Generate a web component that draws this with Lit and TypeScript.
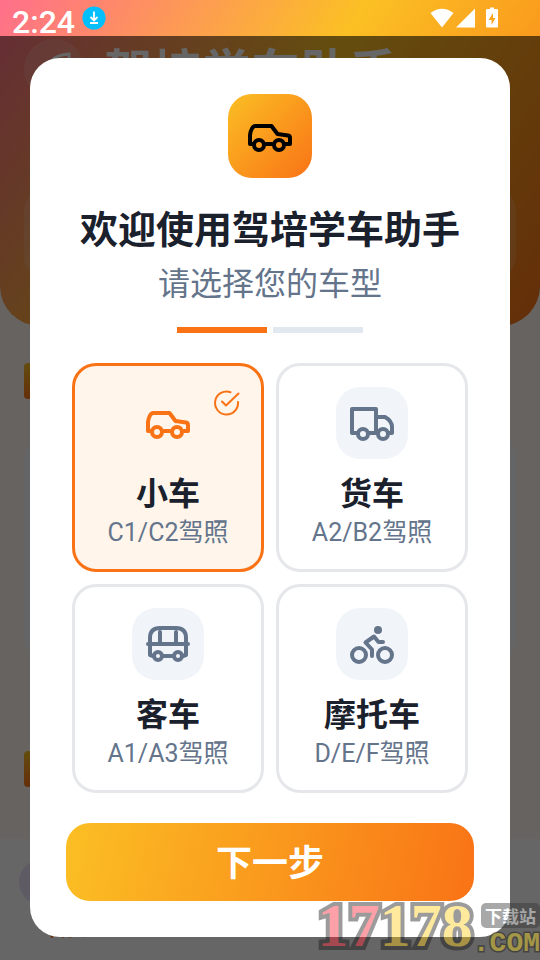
import { LitElement, html, svg, css } from "lit";
import { customElement, state } from "lit/decorators.js";
import { classMap } from "lit/directives/class-map.js";

const carIcon = svg`
  <path d="M8 32H4V23C4.500 18 7 14 9 14H25.500L31.500 22L42 23.500Q44 24 44 26V32H40M20 32H26" />
  <circle cx="13" cy="33" r="5" />
  <circle cx="33" cy="33" r="5" />`;

const truckIcon = svg`
  <path d="M9 34H4V10H28V34M28 18H37Q44 22 44 28V34H41M20 34H29" />
  <circle cx="15" cy="35" r="5" />
  <circle cx="35" cy="35" r="5" />`;

const busIcon = svg`
  <path d="M9 36L6 35V18Q6 8 16 8H32Q42 8 42 18V35L39 36M4 24H44M16 12V24M32 12V24M19 36H29" />
  <circle cx="14" cy="36" r="4" />
  <circle cx="34" cy="36" r="4" />`;

const motoIcon = svg`
  <circle cx="11" cy="35" r="7" />
  <circle cx="37" cy="35" r="7" />
  <circle class="solid" cx="30" cy="10" r="4" />
  <path d="M24 36V29.500L17.500 22.500L26 16.500L30.500 22H35" />`;

const vehicles = [
  { id: "car", name: "小车", licence: "C1/C2驾照", icon: carIcon },
  { id: "truck", name: "货车", licence: "A2/B2驾照", icon: truckIcon },
  { id: "bus", name: "客车", licence: "A1/A3驾照", icon: busIcon },
  { id: "moto", name: "摩托车", licence: "D/E/F驾照", icon: motoIcon },
];

@customElement("status-bar")
export class StatusBar extends LitElement {
  static styles = css`
    :host {
      display: flex;
      align-items: center;
      height: 36px;
      padding: 0 42px 0 12px;
      box-sizing: border-box;
      color: #fff;
    }
    .time {
      font: 500 32px/44px Roboto, sans-serif;
      margin-top: 8px;
    }
    .download {
      width: 24px;
      height: 24px;
      margin-left: 7px;
    }
    .system {
      width: 68px;
      height: 22px;
      margin-left: auto;
    }
  `;

  render() {
    return html`
      <span class="time">2:24</span>
      <svg class="download" viewBox="0 0 24 24" aria-hidden="true">
        <circle cx="12" cy="12" r="11.600" fill="#00bfff" />
        <path d="M12 5.500V14M8.500 11L12 14.500L15.500 11M8 17H16" fill="none" stroke="#fff" stroke-width="1.800" />
      </svg>
      <svg class="system" viewBox="0 0 68 22" fill="#fff" aria-hidden="true">
        <path d="M0.500 6Q12 -2.500 23.500 6L12 20.500Z" />
        <path d="M45 1.500V20.500H26Z" />
        <path
          fill-rule="evenodd"
          d="M60 0.500H64V2H67Q68 2 68 3V20Q68 20.500 67 20.500H57Q56 20.500 56 19.500V3Q56 2 57 2H60ZM63 6L58.500 13H61.500V18L65.500 11H63Z"
        />
      </svg>
    `;
  }
}

@customElement("home-page")
export class HomePage extends LitElement {
  static styles = css`
    :host {
      display: flex;
      flex-direction: column;
      background: #fff8f0;
    }
    .hero {
      padding-bottom: 46px;
      border-radius: 0 0 40px 40px;
      background: linear-gradient(125deg, #ff6f8b 0%, #fbc024 48%, #f97316 100%);
    }
    .brand {
      display: flex;
      align-items: center;
      gap: 20px;
      padding: 3px 24px 0;
      color: #fff;
    }
    .logo {
      width: 60px;
      height: 60px;
      border-radius: 50%;
      background: rgba(255, 255, 255, 0.15);
    }
    .name {
      margin: 0;
      font: 700 49px/56px "Noto Sans CJK SC", sans-serif;
      white-space: nowrap;
    }
    .stats {
      height: 93px;
      margin: 88px 24px 0;
      border-radius: 24px;
      background: rgba(255, 255, 255, 0.15);
    }
    .sections {
      flex: 1;
      padding: 37px 24px 0;
    }
    .marker {
      width: 8px;
      height: 36px;
      border-radius: 4px;
      background: linear-gradient(#fbbf24, #f97316);
    }
    .panel {
      height: 225px;
      margin: 37px 0 90px;
      border-radius: 24px;
      background: #fafcff;
    }
    .tabs {
      display: flex;
      height: 121px;
      padding: 20px 19px 0;
      box-sizing: border-box;
      background: #fff;
    }
    .tab {
      display: flex;
      flex-direction: column;
      align-items: center;
      width: 96px;
      font: 500 19px/28px "Noto Sans CJK SC", sans-serif;
      color: #f97316;
    }
    .dot {
      width: 96px;
      height: 46px;
      border-radius: 23px;
      background: #ebe4fb;
      margin-bottom: 9px;
    }
  `;

  render() {
    return html`
      <header class="hero">
        <status-bar></status-bar>
        <div class="brand">
          <svg class="logo" viewBox="0 0 60 60" fill="none" stroke="#fff" stroke-width="3">
            <path d="M20 40C20 24 30 16 45 15C46 30 40 40 24 44Z" />
          </svg>
          <h1 class="name">驾培学车助手</h1>
        </div>
        <div class="stats"></div>
      </header>
      <div class="sections">
        <div class="marker"></div>
        <div class="panel"></div>
        <div class="marker"></div>
      </div>
      <nav class="tabs">
        <div class="tab"><span class="dot"></span>首页</div>
      </nav>
    `;
  }
}

@customElement("site-mark")
export class SiteMark extends LitElement {
  static styles = css`
    :host {
      display: flex;
      align-items: flex-end;
      opacity: 0.42;
      pointer-events: none;
      white-space: nowrap;
    }
    .digits {
      font: 700 62px/70px "Liberation Serif", serif;
      color: #ffcd16;
      -webkit-text-stroke: 8px #141414;
      paint-order: stroke fill;
    }
    .red {
      color: #fc2032;
    }
    .side {
      display: flex;
      flex-direction: column;
      align-items: flex-end;
    }
    .tag {
      padding: 0 4px;
      border-radius: 5px;
      background: #333;
      color: #fff;
      font: 700 17px/25px "Noto Sans CJK SC", sans-serif;
    }
    .domain {
      font: 700 28px/32px "Liberation Mono", monospace;
      color: #f7d81e;
      -webkit-text-stroke: 3px #141414;
      paint-order: stroke fill;
    }
  `;

  render() {
    return html`
      <span class="digits"><span class="red">17</span>178</span>
      <span class="side"><span class="tag">下载站</span><span class="domain">.COM</span></span>
    `;
  }
}

@customElement("app-root")
export class AppRoot extends LitElement {
  @state() private selected = "car";

  static styles = css`
    :host {
      display: grid;
      position: relative;
      min-height: 100vh;
      overflow: hidden;
      font-family: Roboto, "Noto Sans CJK SC", sans-serif;
    }
    .page,
    .overlay {
      grid-area: 1 / 1;
      min-width: 0;
    }
    .overlay {
      display: flex;
      align-items: flex-start;
      margin-top: 36px;
      padding: 22px 30px;
      background: rgba(0, 0, 0, 0.6);
    }
    .dialog {
      flex: 1;
      display: flex;
      flex-direction: column;
      align-items: center;
      padding: 36px;
      border-radius: 30px;
      background: #fff;
      min-width: 0;
    }
    .icon {
      width: 48px;
      height: 48px;
      fill: none;
      stroke: currentColor;
      stroke-width: 4;
      stroke-linecap: round;
      stroke-linejoin: round;
    }
    .icon .solid {
      fill: currentColor;
      stroke: none;
    }
    .badge {
      display: grid;
      place-items: center;
      width: 84px;
      height: 84px;
      border-radius: 24px;
      color: #000;
      background: linear-gradient(135deg, #fbbf24, #f97316);
    }
    .title {
      margin: 26px 0 6px;
      font-size: 38px;
      line-height: 52px;
      font-weight: 700;
      color: #1a202c;
      white-space: nowrap;
    }
    .subtitle {
      margin: 0;
      font-size: 32px;
      line-height: 44px;
      color: #64748b;
    }
    .steps {
      display: flex;
      gap: 6px;
      margin: 21px 0 30px;
    }
    .step {
      width: 90px;
      height: 6px;
      background: #e2e8f0;
    }
    .step.on {
      background: #f97316;
    }
    .choices {
      display: grid;
      grid-template-columns: 1fr 1fr;
      gap: 12px;
      align-self: stretch;
      margin: 0 6px;
      padding: 0;
      border: 0;
      min-width: 0;
    }
    .choice {
      position: relative;
      display: flex;
      flex-direction: column;
      align-items: center;
      padding: 21px 0 20px;
      border: 3px solid #e5e7eb;
      border-radius: 24px;
      cursor: pointer;
    }
    .choice.on {
      border-color: #f97316;
      background: #fff5eb;
    }
    .radio {
      position: absolute;
      inset: 0;
      margin: 0;
      opacity: 0;
      cursor: pointer;
    }
    .tile {
      display: grid;
      place-items: center;
      width: 72px;
      height: 72px;
      margin-bottom: 13px;
      border-radius: 24px;
      color: #64748b;
      background: #f1f5f9;
    }
    .choice.on .tile {
      color: #f97316;
      background: none;
    }
    .kind {
      font-size: 32px;
      line-height: 44px;
      font-weight: 700;
      color: #1a202c;
    }
    .licence {
      font-size: 25px;
      line-height: 33px;
      color: #64748b;
    }
    .check {
      position: absolute;
      top: 23px;
      right: 20px;
      width: 28px;
      height: 28px;
      fill: none;
      stroke: #f97316;
      stroke-width: 2;
      stroke-linecap: round;
      stroke-linejoin: round;
    }
    .next {
      align-self: stretch;
      height: 78px;
      margin-top: 30px;
      padding: 0 0 4px;
      border: 0;
      border-radius: 24px;
      font: 700 36px/48px "Noto Sans CJK SC", sans-serif;
      color: #fff;
      background: linear-gradient(102deg, #fbbf24, #f97316);
      cursor: pointer;
    }
    .mark {
      position: absolute;
      right: 0;
      bottom: 0;
    }
  `;

  private renderVehicle(v: (typeof vehicles)[number]) {
    const on = v.id === this.selected;
    return html`
      <label class=${classMap({ choice: true, on })}>
        <input
          class="radio"
          type="radio"
          name="vehicle"
          .value=${v.id}
          .checked=${on}
          @change=${() => (this.selected = v.id)}
        />
        <span class="tile"><svg class="icon" viewBox="0 0 48 48" aria-hidden="true">${v.icon}</svg></span>
        <span class="kind">${v.name}</span>
        <span class="licence">${v.licence}</span>
        ${on
          ? html`<svg class="check" viewBox="0 0 28 28" aria-hidden="true">
              <path d="M17.500 3.200A11.500 11.500 0 1 0 25 13M9 12.500L13 16.500L25.500 4.500" />
            </svg>`
          : ""}
      </label>
    `;
  }

  render() {
    return html`
      <home-page class="page" aria-hidden="true"></home-page>
      <div class="overlay">
        <section class="dialog" role="dialog" aria-modal="true" aria-labelledby="title">
          <span class="badge"><svg class="icon" viewBox="0 0 48 48" aria-hidden="true">${carIcon}</svg></span>
          <h2 class="title" id="title">欢迎使用驾培学车助手</h2>
          <p class="subtitle">请选择您的车型</p>
          <div class="steps"><span class="step on"></span><span class="step"></span></div>
          <fieldset class="choices" aria-label="请选择您的车型">
            ${vehicles.map((v) => this.renderVehicle(v))}
          </fieldset>
          <button class="next" type="button">下一步</button>
        </section>
      </div>
      <site-mark class="mark"></site-mark>
    `;
  }
}
